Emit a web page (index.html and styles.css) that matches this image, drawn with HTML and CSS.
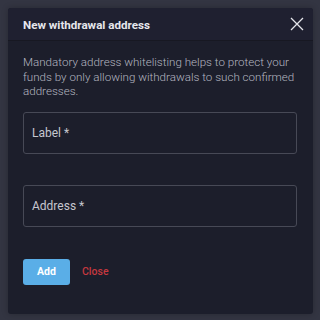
FILE: index.html
```html
<!DOCTYPE html>
<html>
<head>
<meta charset="utf-8">
<link rel="stylesheet" href="styles.css">
</head>
<body>
<div class="dialog">
  <div class="header">
    <div class="title">New withdrawal address</div>
    <svg class="close-icon" width="14" height="14" viewBox="0 0 14 14"><path d="M1 1L13 13M13 1L1 13" stroke="#e4e5ea" stroke-width="1.3" fill="none"/></svg>
  </div>
  <div class="body">
    <p class="desc">Mandatory address whitelisting helps to protect your funds by only allowing withdrawals to such confirmed addresses.</p>
    <div class="field"><span class="ph">Label *</span></div>
    <div class="field"><span class="ph">Address *</span></div>
    <div class="actions">
      <button class="btn-add">Add</button>
      <span class="btn-close">Close</span>
    </div>
  </div>
</div>
</body>
</html>
```
FILE: styles.css
```css
html, body { margin: 0; padding: 0; }
body {
  width: 320px; height: 320px;
  background: #333542;
  font-family: Roboto, "Noto Sans", sans-serif;
  padding: 8px 7px 6px 8px;
  box-sizing: border-box;
}
.dialog {
  background: #1c1e2b;
  border-radius: 3px;
  height: 306px;
  display: flex;
  flex-direction: column;
  box-shadow: 0 0 6px rgba(0,0,0,0.25);
}
.header {
  height: 32px;
  border-bottom: 1px solid #171822;
  background: #1f2030;
  display: flex;
  align-items: center;
  justify-content: space-between;
  padding: 0 9px 0 15px;
  border-radius: 3px 3px 0 0;
}
.title {
  color: #e6e7ec;
  font-weight: 700;
  font-size: 11.6px;
  padding-top: 2px;
}
.close-icon { display: block; }
.body {
  padding: 14px 15px 0 15px;
}
.desc {
  margin: 0;
  color: #b4b6c0;
  font-size: 11.6px;
  font-weight: 300;
  line-height: 14.5px;
}
.field {
  margin-top: 13px;
  height: 40px;
  border: 1px solid #474956;
  border-radius: 3px;
  display: flex;
  align-items: center;
  padding-left: 8px;
  margin-right: 1px;
}
.field + .field { margin-top: 31px; }
.ph {
  color: #c6c7cf;
  font-size: 12px;
}
.actions {
  margin-top: 32px;
  display: flex;
  align-items: center;
  gap: 12px;
}
.btn-add {
  width: 47px; height: 26px;
  border: none;
  border-radius: 3px;
  background: #5aaee7;
  color: #fff;
  font-family: Roboto, sans-serif;
  font-weight: 700;
  font-size: 10.5px;
  padding: 0;
}
.btn-close {
  color: #c5383f;
  font-size: 10.5px;
  font-weight: 500;
}
```
